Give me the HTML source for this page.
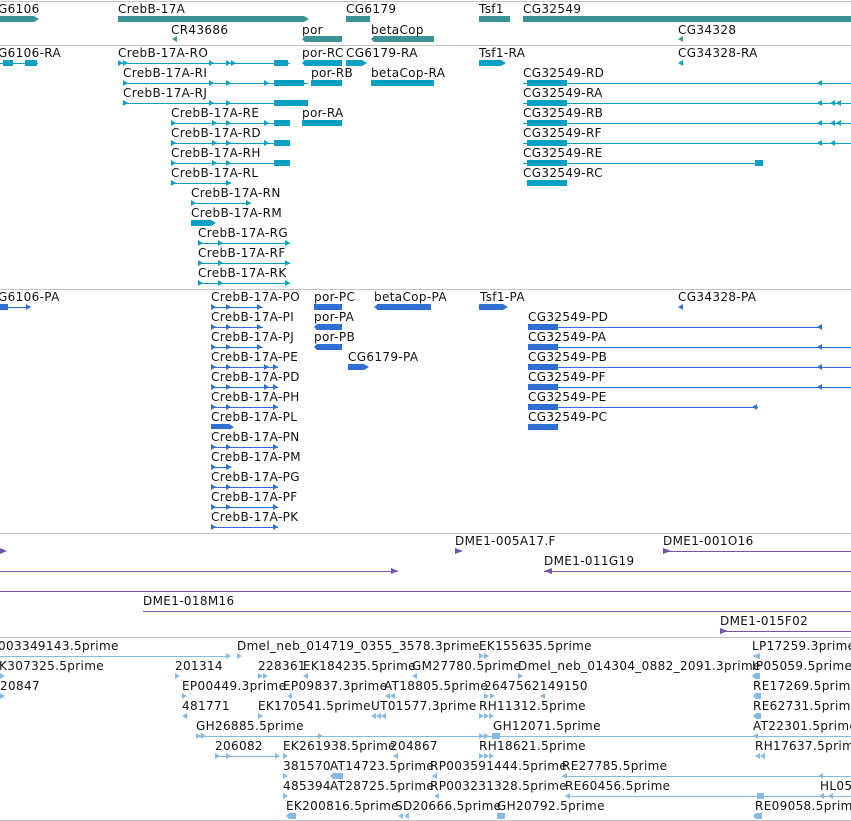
<!DOCTYPE html>
<html><head><meta charset="utf-8"><style>
html,body{margin:0;padding:0;background:#fff;width:851px;height:821px;overflow:hidden}
svg text{font-family:"DejaVu Sans","Liberation Sans",sans-serif;font-size:12px;fill:#111;letter-spacing:0.35px}
</style></head><body>
<svg width="851" height="821" xmlns="http://www.w3.org/2000/svg">
<g fill="#c4c4c4">
<rect x="0" y="1" width="851" height="1"/><rect x="0" y="45" width="851" height="1"/>
<rect x="0" y="289" width="851" height="1"/><rect x="0" y="533" width="851" height="1"/>
<rect x="0" y="637" width="851" height="1"/><rect x="0" y="820" width="851" height="1"/>
</g>
<!-- GENES -->
<g fill="#3f9198">
<rect x="0" y="16" width="34" height="6"/><path d="M34 16l5 3-5 3z"/>
<rect x="118" y="16" width="186" height="6"/><path d="M304 16l5 3-5 3z"/>
<rect x="346" y="16" width="24" height="6"/>
<rect x="479" y="16" width="31" height="6"/>
<rect x="523" y="16" width="328" height="6"/>
<path d="M172 39l5-3v6z"/>
<rect x="305" y="36" width="37" height="6"/><path d="M302 39l3-3v6z"/>
<rect x="374" y="36" width="60" height="6"/><path d="M371 39l3-3v6z"/>
<path d="M678 39l5-3v6z"/>
</g>
<g>
<text x="-2" y="13">G6106</text><text x="118" y="13">CrebB-17A</text><text x="346" y="13">CG6179</text>
<text x="479" y="13">Tsf1</text><text x="523" y="13">CG32549</text>
<text x="171" y="34">CR43686</text><text x="302" y="34">por</text><text x="371" y="34">betaCop</text><text x="678" y="34">CG34328</text>
</g>
<!-- TRANSCRIPTS -->
<g fill="#0aa0c4">
<rect x="0" y="63" width="38" height="1"/><rect x="3" y="60" width="10" height="6"/><rect x="25" y="60" width="12" height="6"/>
<rect x="118" y="63" width="172" height="1"/><path d="M118 60l5 3-5 3zM123 60l5 3-5 3zM209 60l5 3-5 3zM226 60l5 3-5 3zM231 60l5 3-5 3z"/><rect x="274" y="60" width="14" height="6"/>
<rect x="305" y="60" width="37" height="6"/><path d="M302 63l3-3v6z"/>
<rect x="346" y="60" width="16" height="6"/><path d="M362 60l5 3-5 3z"/>
<rect x="479" y="60" width="22" height="6"/><path d="M501 60l5 3-5 3z"/>
<path d="M678 63l5-3v6z"/>
<!-- k1 -->
<rect x="123" y="83" width="185" height="1"/><path d="M123 80l5 3-5 3zM209 80l5 3-5 3zM226 80l5 3-5 3zM264 80l5 3-5 3z"/><rect x="274" y="80" width="30" height="6"/>
<rect x="311" y="80" width="31" height="6"/>
<rect x="371" y="80" width="63" height="6"/>
<rect x="523" y="83" width="328" height="1"/><rect x="527" y="80" width="40" height="6"/><path d="M817 83l5-3v6z"/>
<!-- k2 -->
<rect x="123" y="103" width="185" height="1"/><path d="M123 100l5 3-5 3zM209 100l5 3-5 3zM226 100l5 3-5 3z"/><rect x="274" y="100" width="34" height="6"/>
<rect x="523" y="103" width="328" height="1"/><rect x="527" y="100" width="40" height="6"/><path d="M817 103l5-3v6zM830 103l5-3v6zM836 103l5-3v6z"/>
<!-- k3 -->
<rect x="171" y="123" width="119" height="1"/><path d="M171 120l5 3-5 3zM212 120l5 3-5 3zM226 120l5 3-5 3zM264 120l5 3-5 3z"/><rect x="274" y="120" width="16" height="6"/>
<rect x="302" y="120" width="40" height="6"/>
<rect x="523" y="123" width="328" height="1"/><rect x="527" y="120" width="40" height="6"/><path d="M817 123l5-3v6zM830 123l5-3v6zM836 123l5-3v6z"/>
<!-- k4 -->
<rect x="171" y="143" width="119" height="1"/><path d="M171 140l5 3-5 3zM212 140l5 3-5 3zM226 140l5 3-5 3zM264 140l5 3-5 3z"/><rect x="274" y="140" width="16" height="6"/>
<rect x="523" y="143" width="328" height="1"/><rect x="527" y="140" width="40" height="6"/><path d="M817 143l5-3v6zM830 143l5-3v6z"/>
<!-- k5 -->
<rect x="171" y="163" width="119" height="1"/><path d="M171 160l5 3-5 3zM212 160l5 3-5 3zM226 160l5 3-5 3z"/><rect x="274" y="160" width="16" height="6"/>
<rect x="523" y="163" width="240" height="1"/><rect x="527" y="160" width="40" height="6"/><rect x="755" y="160" width="8" height="6"/>
<!-- k6 -->
<rect x="171" y="183" width="60" height="1"/><path d="M171 180l5 3-5 3zM226 180l5 3-5 3z"/>
<rect x="527" y="180" width="40" height="6"/>
<!-- k7 -->
<rect x="191" y="203" width="60" height="1"/><path d="M191 200l5 3-5 3zM246 200l5 3-5 3z"/>
<!-- k8 -->
<rect x="191" y="220" width="20" height="6"/><path d="M211 220l5 3-5 3z"/>
<!-- k9-11 -->
<rect x="198" y="243" width="92" height="1"/><path d="M198 240l5 3-5 3zM218 240l5 3-5 3zM285 240l5 3-5 3z"/>
<rect x="198" y="263" width="92" height="1"/><path d="M198 260l5 3-5 3zM218 260l5 3-5 3zM285 260l5 3-5 3z"/>
<rect x="198" y="283" width="92" height="1"/><path d="M198 280l5 3-5 3zM218 280l5 3-5 3zM285 280l5 3-5 3z"/>
</g>
<g>
<text x="-2" y="57">G6106-RA</text><text x="118" y="57">CrebB-17A-RO</text><text x="302" y="57">por-RC</text><text x="346" y="57">CG6179-RA</text><text x="479" y="57">Tsf1-RA</text><text x="678" y="57">CG34328-RA</text>
<text x="123" y="77">CrebB-17A-RI</text><text x="311" y="77">por-RB</text><text x="371" y="77">betaCop-RA</text><text x="523" y="77">CG32549-RD</text>
<text x="123" y="97">CrebB-17A-RJ</text><text x="523" y="97">CG32549-RA</text>
<text x="171" y="117">CrebB-17A-RE</text><text x="302" y="117">por-RA</text><text x="523" y="117">CG32549-RB</text>
<text x="171" y="137">CrebB-17A-RD</text><text x="523" y="137">CG32549-RF</text>
<text x="171" y="157">CrebB-17A-RH</text><text x="523" y="157">CG32549-RE</text>
<text x="171" y="177">CrebB-17A-RL</text><text x="523" y="177">CG32549-RC</text>
<text x="191" y="197">CrebB-17A-RN</text><text x="191" y="217">CrebB-17A-RM</text>
<text x="198" y="237">CrebB-17A-RG</text><text x="198" y="257">CrebB-17A-RF</text><text x="198" y="277">CrebB-17A-RK</text>
</g>
<!-- PROTEINS -->
<g fill="#2f6fd4">
<rect x="0" y="307" width="30" height="1"/><rect x="0" y="304" width="8" height="6"/><path d="M26 304l5 3-5 3z"/>
<rect x="314" y="304" width="28" height="6"/>
<rect x="377" y="304" width="54" height="6"/><path d="M374 307l4-3v6z"/>
<rect x="479" y="304" width="24" height="6"/><path d="M503 304l5 3-5 3z"/>
<path d="M678 307l5-3v6z"/>
<rect x="317" y="324" width="25" height="6"/><path d="M314 327l3-3v6z"/>
<rect x="317" y="344" width="25" height="6"/><path d="M314 347l3-3v6z"/>
<rect x="348" y="364" width="16" height="6"/><path d="M364 364l5 3-5 3z"/>
<rect x="528" y="327" width="294" height="1"/><rect x="528" y="324" width="30" height="6"/><path d="M817 327l5-3v6z"/>
<rect x="528" y="347" width="323" height="1"/><rect x="528" y="344" width="30" height="6"/><path d="M817 347l5-3v6z"/>
<rect x="528" y="367" width="323" height="1"/><rect x="528" y="364" width="30" height="6"/><path d="M817 367l5-3v6z"/>
<rect x="528" y="387" width="323" height="1"/><rect x="528" y="384" width="30" height="6"/><path d="M817 387l5-3v6z"/>
<rect x="528" y="407" width="230" height="1"/><rect x="528" y="404" width="30" height="6"/><path d="M752 407l5-3v6z"/>
<rect x="528" y="424" width="30" height="6"/>
</g>
<g fill="#2f6fd4">
<rect x="211" y="307" width="52" height="1"/><path d="M211 304l5 3-5 3zM226 304l5 3-5 3zM257 304l5 3-5 3z"/>
<rect x="211" y="327" width="52" height="1"/><path d="M211 324l5 3-5 3zM226 324l5 3-5 3zM257 324l5 3-5 3z"/>
<rect x="211" y="347" width="52" height="1"/><path d="M211 344l5 3-5 3zM226 344l5 3-5 3zM257 344l5 3-5 3z"/>
<rect x="211" y="367" width="67" height="1"/><path d="M211 364l5 3-5 3zM226 364l5 3-5 3zM264 364l5 3-5 3zM273 364l5 3-5 3z"/>
<rect x="211" y="387" width="67" height="1"/><path d="M211 384l5 3-5 3zM226 384l5 3-5 3zM264 384l5 3-5 3zM273 384l5 3-5 3z"/>
<rect x="211" y="407" width="67" height="1"/><path d="M211 404l5 3-5 3zM226 404l5 3-5 3zM273 404l5 3-5 3z"/>
<rect x="211" y="424" width="18" height="5"/><path d="M229 424l5 3-5 3z"/>
<rect x="211" y="447" width="67" height="1"/><path d="M211 444l5 3-5 3zM226 444l5 3-5 3zM273 444l5 3-5 3z"/>
<rect x="211" y="467" width="20" height="1"/><path d="M211 464l5 3-5 3zM226 464l6 3-6 3z"/>
<rect x="211" y="487" width="67" height="1"/><path d="M211 484l5 3-5 3zM226 484l5 3-5 3zM273 484l5 3-5 3z"/>
<rect x="211" y="507" width="67" height="1"/><path d="M211 504l5 3-5 3zM226 504l5 3-5 3zM273 504l5 3-5 3z"/>
<rect x="211" y="527" width="67" height="1"/><path d="M211 524l5 3-5 3zM273 524l5 3-5 3z"/>
</g>
<g>
<text x="-2" y="301">G6106-PA</text><text x="211" y="301">CrebB-17A-PO</text><text x="314" y="301">por-PC</text><text x="374" y="301">betaCop-PA</text><text x="480" y="301">Tsf1-PA</text><text x="678" y="301">CG34328-PA</text>
<text x="211" y="321">CrebB-17A-PI</text><text x="314" y="321">por-PA</text><text x="528" y="321">CG32549-PD</text>
<text x="211" y="341">CrebB-17A-PJ</text><text x="314" y="341">por-PB</text><text x="528" y="341">CG32549-PA</text>
<text x="211" y="361">CrebB-17A-PE</text><text x="348" y="361">CG6179-PA</text><text x="528" y="361">CG32549-PB</text>
<text x="211" y="381">CrebB-17A-PD</text><text x="528" y="381">CG32549-PF</text>
<text x="211" y="401">CrebB-17A-PH</text><text x="528" y="401">CG32549-PE</text>
<text x="211" y="421">CrebB-17A-PL</text><text x="528" y="421">CG32549-PC</text>
<text x="211" y="441">CrebB-17A-PN</text><text x="211" y="461">CrebB-17A-PM</text><text x="211" y="481">CrebB-17A-PG</text>
<text x="211" y="501">CrebB-17A-PF</text><text x="211" y="521">CrebB-17A-PK</text>
</g>
<!-- PURPLE -->
<g fill="#7652aa">
<path d="M0 548l7 3-7 3z"/>
<path d="M455 548l8 3-8 3z"/>
<rect x="663" y="551" width="188" height="1"/><path d="M663 548l8 3-8 3z"/>
<rect x="0" y="571" width="398" height="1"/><path d="M391 568l7 3-7 3z"/>
<rect x="544" y="571" width="307" height="1"/><path d="M544 571l8-3v6z"/>
<rect x="0" y="591" width="851" height="1"/>
<rect x="143" y="611" width="708" height="1"/>
<rect x="720" y="631" width="131" height="1"/><path d="M720 628l8 3-8 3z"/>
</g>
<g>
<text x="455" y="545">DME1-005A17.F</text><text x="663" y="545">DME1-001O16</text>
<text x="544" y="565">DME1-011G19</text><text x="143" y="605">DME1-018M16</text><text x="720" y="625">DME1-015F02</text>
</g>
<!-- LIGHT BLUE -->
<g fill="#85bbe2">
<rect x="0" y="656" width="230" height="1"/><path d="M226 653l5 3-5 3zM237 653l5 3-5 3z"/>
<path d="M479 653l5 3-5 3zM484 653l5 3-5 3z"/><path d="M752 656l8-3v6z"/>
<path d="M0 673l5 3-5 3z"/><path d="M175 673l5 3-5 3z"/><path d="M258 673l5 3-5 3zM263 673l5 3-5 3z"/><path d="M303 676l5-3v6z"/><path d="M412 676l5-3v6z"/><path d="M518 673l5 3-5 3z"/><rect x="755" y="673" width="5" height="6"/><path d="M752 676l3-3v6z"/>
<path d="M0 693l5 3-5 3z"/><path d="M182 693l5 3-5 3z"/><path d="M287 696l5-3v6z"/><path d="M385 696l5-3v6zM390 696l5-3v6z"/><path d="M484 693l5 3-5 3zM490 693l5 3-5 3z"/><path d="M540 696l5-3v6z"/><rect x="756" y="693" width="5" height="6"/><path d="M753 696l3-3v6z"/>
<path d="M182 716l5-3v6z"/><path d="M258 713l5 3-5 3z"/><path d="M371 716l5-3v6zM376 716l5-3v6zM381 716l5-3v6z"/><path d="M479 713l5 3-5 3zM484 713l5 3-5 3zM489 713l5 3-5 3z"/><rect x="756" y="713" width="5" height="6"/><path d="M753 716l3-3v6z"/>
<rect x="196" y="736" width="655" height="1"/><path d="M196 733l5 3-5 3zM201 733l5 3-5 3zM318 733l5 3-5 3zM479 733l5 3-5 3zM484 733l5 3-5 3z"/><rect x="492" y="733" width="8" height="6"/><path d="M753 736l5-3v6z"/>
<rect x="215" y="756" width="64" height="1"/><path d="M215 753l5 3-5 3zM226 753l5 3-5 3zM275 753l5 3-5 3z"/><path d="M283 753l5 3-5 3z"/><path d="M393 756l5-3v6z"/><path d="M479 753l5 3-5 3zM484 753l5 3-5 3zM489 753l5 3-5 3z"/><path d="M755 756l5-3v6zM760 756l5-3v6z"/>
<path d="M283 773l5 3-5 3z"/><rect x="333" y="773" width="10" height="6"/><path d="M330 776l3-3v6z"/><path d="M432 776l5-3v6z"/><rect x="562" y="776" width="289" height="1"/><path d="M562 776l5-3v6zM818 776l5-3v6z"/>
<path d="M283 793l5 3-5 3z"/><path d="M434 796l5-3v6z"/><rect x="565" y="796" width="286" height="1"/><path d="M565 796l5-3v6z"/><rect x="757" y="793" width="7" height="6"/><path d="M819 796l5-3v6zM828 796l5-3v6z"/>
<rect x="289" y="813" width="7" height="6"/><path d="M286 816l3-3v6z"/><path d="M398 816l5-3v6zM404 816l5-3v6z"/><rect x="497" y="813" width="8" height="6"/><rect x="756" y="813" width="6" height="6"/><path d="M753 816l3-3v6z"/>
</g>
<g>
<text x="-2" y="650">003349143.5prime</text><text x="237" y="650">Dmel_neb_014719_0355_3578.3prime</text><text x="479" y="650">EK155635.5prime</text><text x="752" y="650">LP17259.3prime</text>
<text x="-1" y="670">K307325.5prime</text><text x="175" y="670">201314</text><text x="258" y="670">228361</text><text x="303" y="670">EK184235.5prime</text><text x="412" y="670">GM27780.5prime</text><text x="518" y="670">Dmel_neb_014304_0882_2091.3prime</text><text x="752" y="670">IP05059.5prime</text>
<text x="0" y="690">20847</text><text x="182" y="690">EP00449.3prime</text><text x="283" y="690">EP09837.3prime</text><text x="384" y="690">AT18805.5prime</text><text x="484" y="690">2647562149150</text><text x="753" y="690">RE17269.5prime</text>
<text x="182" y="710">481771</text><text x="258" y="710">EK170541.5prime</text><text x="371" y="710">UT01577.3prime</text><text x="479" y="710">RH11312.5prime</text><text x="753" y="710">RE62731.5prime</text>
<text x="196" y="730">GH26885.5prime</text><text x="493" y="730">GH12071.5prime</text><text x="753" y="730">AT22301.5prime</text>
<text x="215" y="750">206082</text><text x="283" y="750">EK261938.5prime</text><text x="390" y="750">204867</text><text x="479" y="750">RH18621.5prime</text><text x="755" y="750">RH17637.5prime</text>
<text x="283" y="770">381570</text><text x="330" y="770">AT14723.5prime</text><text x="430" y="770">RP003591444.5prime</text><text x="562" y="770">RE27785.5prime</text><text x="820" y="790">HL05</text>
<text x="283" y="790">485394</text><text x="330" y="790">AT28725.5prime</text><text x="430" y="790">RP003231328.5prime</text><text x="565" y="790">RE60456.5prime</text>
<text x="286" y="810">EK200816.5prime</text><text x="395" y="810">SD20666.5prime</text><text x="497" y="810">GH20792.5prime</text><text x="755" y="810">RE09058.5prime</text>
</g>
</svg>
</body></html>
